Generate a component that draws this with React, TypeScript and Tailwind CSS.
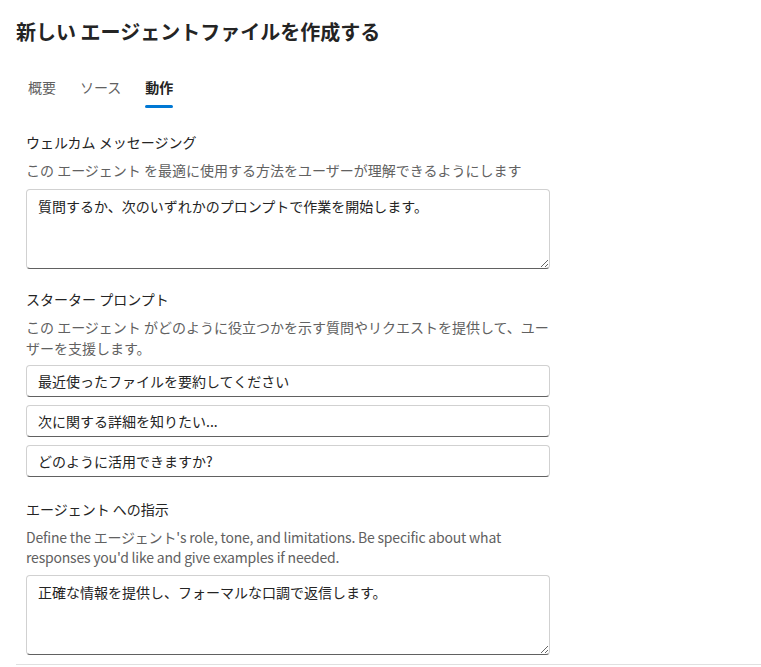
import React from "react";

const font = {
  fontFamily: '"Segoe UI", "Noto Sans CJK JP", "Noto Sans", sans-serif',
};

function Field({ value }: { value: string }) {
  return (
    <div className="h-[32px] rounded-[4px] border border-[#d1d1d1] border-b-[#616161] bg-white px-[11px] flex items-center text-[14px] leading-5 text-[#242424]">
      {value}
    </div>
  );
}

function Area({ value }: { value: string }) {
  return (
    <textarea
      defaultValue={value}
      className="block h-[80px] w-full resize-y rounded-[4px] border border-[#d1d1d1] border-b-[#616161] bg-white px-[11px] pt-[6px] text-[14px] leading-5 text-[#242424] outline-none"
      style={font}
    />
  );
}

export default function App() {
  const tabs = [
    { label: "概要", active: false },
    { label: "ソース", active: false },
    { label: "動作", active: true },
  ];
  return (
    <div className="min-h-screen bg-white pl-4" style={font}>
      <h1 className="pt-[18px] text-[20px] leading-7 font-bold text-[#242424]">
        新しい エージェントファイルを作成する
      </h1>
      <div className="mt-[20px] flex">
        {tabs.map((t) => (
          <div key={t.label} className="px-3 pt-[11px] flex flex-col">
            <span
              className={
                "text-[14px] leading-5 " +
                (t.active ? "font-bold text-[#242424]" : "text-[#616161]")
              }
            >
              {t.label}
            </span>
            <span
              className={
                "mt-[8px] h-[3px] rounded-full " +
                (t.active ? "bg-[#0078d4]" : "bg-transparent")
              }
            />
          </div>
        ))}
      </div>

      <div className="ml-[10px] w-[524px]">
        <div className="mt-[24px] text-[14px] leading-5 text-[#242424]">
          ウェルカム メッセージング
        </div>
        <div className="mt-[8px] text-[14px] leading-5 text-[#616161]">
          この エージェント を最適に使用する方法をユーザーが理解できるようにします
        </div>
        <div className="mt-[9px]">
          <Area value="質問するか、次のいずれかのプロンプトで作業を開始します。" />
        </div>

        <div className="mt-[20px] text-[14px] leading-5 text-[#242424]">
          スターター プロンプト
        </div>
        <div className="mt-[8px] text-[14px] leading-[21px] text-[#616161]">
          この エージェント がどのように役立つかを示す質問やリクエストを提供して、ユーザーを支援します。
        </div>
        <div className="mt-[6px] flex flex-col gap-2">
          <Field value="最近使ったファイルを要約してください" />
          <Field value="次に関する詳細を知りたい..." />
          <Field value="どのように活用できますか?" />
        </div>

        <div className="mt-[22px] text-[14px] leading-5 text-[#242424]">
          エージェント への指示
        </div>
        <div className="mt-[8px] w-[490px] text-[14px] leading-5 tracking-[-0.2px] text-[#616161]">
          Define the エージェント's role, tone, and limitations. Be specific about what responses you'd like and give examples if needed.
        </div>
        <div className="mt-[8px]">
          <Area value="正確な情報を提供し、フォーマルな口調で返信します。" />
        </div>
      </div>
      <div className="mt-[9px] h-px bg-[#e0e0e0]" />
    </div>
  );
}
